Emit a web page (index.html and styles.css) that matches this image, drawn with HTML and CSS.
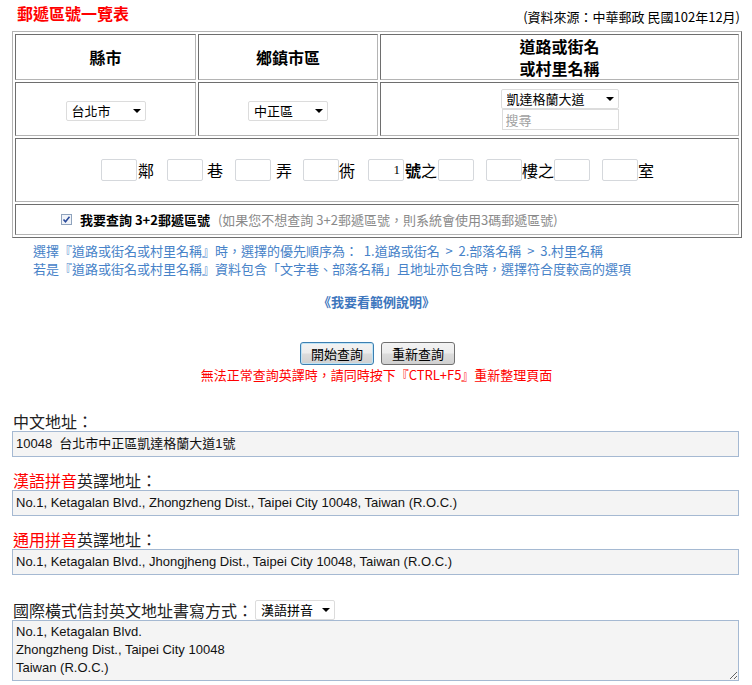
FILE: index.html
```html
<!DOCTYPE html>
<html lang="zh-Hant">
<head>
<meta charset="utf-8">
<title>郵遞區號一覽表</title>
<link rel="stylesheet" href="styles.css">
</head>
<body>
<div class="page">
  <div class="head">
    <h1 class="title">郵遞區號一覽表</h1>
    <span class="source">(資料來源：中華郵政 民國102年12月)</span>
  </div>

  <table class="zip">
    <tr class="row-head">
      <th class="c1">縣市</th>
      <th class="c2">鄉鎮市區</th>
      <th class="c3">道路或街名<br>或村里名稱</th>
    </tr>
    <tr class="row-sel">
      <td><span class="sel w80"><select><option>台北市</option></select></span></td>
      <td><span class="sel w80"><select><option>中正區</option></select></span></td>
      <td>
        <div class="stack">
          <span class="sel w117"><select><option>凱達格蘭大道</option></select></span>
          <input class="search" type="text" placeholder="搜尋">
        </div>
      </td>
    </tr>
    <tr class="row-addr">
      <td colspan="3">
        <div class="addr">
          <input class="box" type="text">
          <span class="lb m1">鄰</span>
          <input class="box m13" type="text">
          <span class="lb m4">巷</span>
          <input class="box m12" type="text">
          <span class="lb m5">弄</span>
          <input class="box m11" type="text">
          <span class="lb">衖</span>
          <input class="box m13" type="text" value="1">
          <span class="lb m1"><b>號</b>之</span>
          <input class="box m1" type="text">
          <input class="box m12" type="text">
          <span class="lb">樓之</span>
          <input class="box" type="text">
          <input class="box m12" type="text">
          <span class="lb">室</span>
        </div>
      </td>
    </tr>
    <tr class="row-check">
      <td colspan="3">
        <div class="check">
          <svg class="cb" width="11" height="11" viewBox="0 0 11 11">
            <rect x="0.5" y="0.5" width="10" height="10" fill="#f1f4f9" stroke="#8fa3bd"/>
            <path d="M2.5 5.5 L4.5 7.8 L8.5 2.8" fill="none" stroke="#2a4a9a" stroke-width="1.6"/>
          </svg>
          <b class="want">我要查詢 3+2郵遞區號</b>
          <span class="hint">(如果您不想查詢 3+2郵遞區號，則系統會使用3碼郵遞區號)</span>
        </div>
      </td>
    </tr>
  </table>

  <div class="notes">
    <p>選擇『道路或街名或村里名稱』時，選擇的優先順序為： &nbsp;1.道路或街名 &nbsp;&gt;&nbsp; 2.部落名稱 &nbsp;&gt;&nbsp; 3.村里名稱</p>
    <p>若是『道路或街名或村里名稱』資料包含「文字巷、部落名稱」且地址亦包含時，選擇符合度較高的選項</p>
  </div>

  <div class="example">《我要看範例說明》</div>

  <div class="actions">
    <button class="btn primary" type="button">開始查詢</button>
    <button class="btn" type="button">重新查詢</button>
  </div>
  <div class="warn">無法正常查詢英譯時，請同時按下『CTRL+F5』重新整理頁面</div>

  <div class="result">
    <div class="label">中文地址：</div>
    <div class="out">10048&nbsp; 台北市中正區凱達格蘭大道1號</div>

    <div class="label gap"><span class="red">漢語拼音</span>英譯地址：</div>
    <div class="out">No.1, Ketagalan Blvd., Zhongzheng Dist., Taipei City 10048, Taiwan (R.O.C.)</div>

    <div class="label gap"><span class="red">通用拼音</span>英譯地址：</div>
    <div class="out">No.1, Ketagalan Blvd., Jhongjheng Dist., Taipei City 10048, Taiwan (R.O.C.)</div>

    <div class="label envelope">國際橫式信封英文地址書寫方式：<span class="sel w80 small"><select><option>漢語拼音</option></select></span></div>
    <textarea class="area" readonly>No.1, Ketagalan Blvd.
Zhongzheng Dist., Taipei City 10048
Taiwan (R.O.C.)</textarea>
  </div>
</div>
</body>
</html>
```

FILE: styles.css
```css
* { box-sizing: border-box; }

body {
  margin: 0;
  background: #fff;
  color: #000;
  font-family: "Noto Sans CJK TC", "Liberation Sans", sans-serif;
}

.page {
  width: 752px;
  padding: 0 11px 0 12px;
}

.head {
  display: flex;
  justify-content: space-between;
  align-items: center;
  height: 31px;
  padding: 0 1px 0 5px;
}

.title {
  margin: 0;
  font-size: 16px;
  line-height: 20px;
  font-weight: bold;
  color: #f00;
  margin-top: -5px;
}

.source {
  font-size: 13px;
  line-height: 16px;
  color: #000;
  margin-top: 3px;
}

/* table */
.zip {
  width: 730px;
  margin-left: 0;
  border-collapse: separate;
  border-spacing: 2px;
  border: 1px solid;
  border-color: #b4b4b4 #6e6e6e #6e6e6e #b4b4b4;
  table-layout: fixed;
}

.zip th,
.zip td {
  border: 1px solid;
  border-color: #6e6e6e #b4b4b4 #b4b4b4 #6e6e6e;
  padding: 0;
  text-align: center;
  vertical-align: middle;
}

.zip .c1 { width: 181px; }
.zip .c2 { width: 180px; }

.row-head th {
  height: 46px;
  font-size: 16px;
  line-height: 22px;
  font-weight: bold;
}

.row-sel td { height: 54px; }
.row-addr td { height: 64px; }
.row-check td { height: 31px; }

/* fake select */
.sel {
  position: relative;
  display: inline-block;
  vertical-align: middle;
}

.sel select {
  appearance: none;
  -webkit-appearance: none;
  display: block;
  height: 20px;
  border: 1px solid #dcdcdc;
  border-radius: 2px;
  background: #fff;
  font-family: "Noto Sans CJK TC", sans-serif;
  font-size: 13px;
  line-height: 18px;
  padding: 0 0 0 5px;
  color: #000;
}

.sel::after {
  content: "";
  position: absolute;
  right: 5px;
  top: 8px;
  border-left: 4px solid transparent;
  border-right: 4px solid transparent;
  border-top: 4px solid #000;
}

.w80 select { width: 80px; }
.w117 select { width: 118px; }

.stack {
  display: inline-flex;
  flex-direction: column;
  align-items: flex-start;
  vertical-align: middle;
}

.search {
  width: 117px;
  height: 21px;
  margin-left: 1px;
  border: 1px solid #dcdcdc;
  font-family: "Noto Sans CJK TC", sans-serif;
  font-size: 13px;
  padding: 0 3px;
  background: #fff;
}

.search::placeholder { color: #a0a0a0; }

/* address inputs */
.addr {
  display: flex;
  justify-content: center;
  align-items: center;
  padding-left: 1px;
}

.box {
  width: 36px;
  height: 22px;
  border: 1px solid #d5d8dc;
  border-radius: 2px;
  background: #fff;
  font-family: "Liberation Serif", serif;
  font-size: 13px;
  text-align: right;
  padding: 0 3px;
}

.lb {
  font-size: 16px;
  line-height: 22px;
  font-family: "Noto Sans CJK TC", serif;
}

.lb b { font-weight: bold; }

.m1 { margin-left: 1px; }
.m4 { margin-left: 4px; }
.m5 { margin-left: 5px; }
.m11 { margin-left: 11px; }
.m12 { margin-left: 12px; }
.m13 { margin-left: 13px; }

/* checkbox row */
.check {
  display: flex;
  align-items: center;
  padding-left: 45px;
  font-size: 13px;
  line-height: 18px;
}

.cb { margin-right: 8px; }

.want { font-weight: bold; margin-right: 8px; }

.hint { color: #8a8a8a; }

/* notes */
.notes {
  padding: 4px 0 0 21px;
  color: #4682c8;
  font-size: 13px;
  line-height: 18px;
}

.notes p { margin: 0; }

.example {
  margin-top: 15px;
  text-align: center;
  color: #3d76bd;
  font-weight: bold;
  font-size: 13px;
  line-height: 18px;
}

.actions {
  margin-top: 31px;
  display: flex;
  justify-content: center;
  gap: 7px;
  padding-left: 2px;
}

.btn {
  width: 74px;
  height: 23px;
  border: 1px solid #707070;
  border-radius: 3px;
  background: linear-gradient(#f3f3f3, #ececec 48%, #dcdcdc 52%, #d0d0d0);
  font-family: "Noto Sans CJK TC", sans-serif;
  font-size: 13px;
  line-height: 19px;
  padding: 0;
  color: #000;
}

.btn.primary {
  border-color: #3c7fb1;
  box-shadow: inset 0 0 0 1px #bfe3f5;
}

.warn {
  text-align: center;
  color: #f00;
  font-size: 13px;
  line-height: 18px;
  margin-top: 1px;
}

/* results */
.result {
  margin-top: 27px;
  width: 727px;
}

.label {
  font-size: 16px;
  line-height: 20px;
  color: #222;
  padding-left: 1px;
}

.label.gap { margin-top: 13px; }

.red { color: #f00; }

.out {
  height: 26px;
  border: 1px solid #a5b9d2;
  background: #f4f4f4;
  font-family: "Liberation Sans", "Noto Sans CJK TC", sans-serif;
  font-size: 13px;
  line-height: 24px;
  padding: 0 3px;
  color: #111;
  white-space: nowrap;
}

.envelope {
  margin-top: 24px;
  display: flex;
  align-items: center;
  height: 21px;
}

.envelope .sel { margin-left: 2px; }

.area {
  display: block;
  width: 727px;
  height: 61px;
  margin: 0;
  border: 1px solid #a5b9d2;
  background: #f4f4f4;
  font-family: "Liberation Sans", sans-serif;
  font-size: 13px;
  line-height: 18px;
  padding: 2px 3px;
  color: #111;
  resize: both;
  overflow: hidden;
}
```
